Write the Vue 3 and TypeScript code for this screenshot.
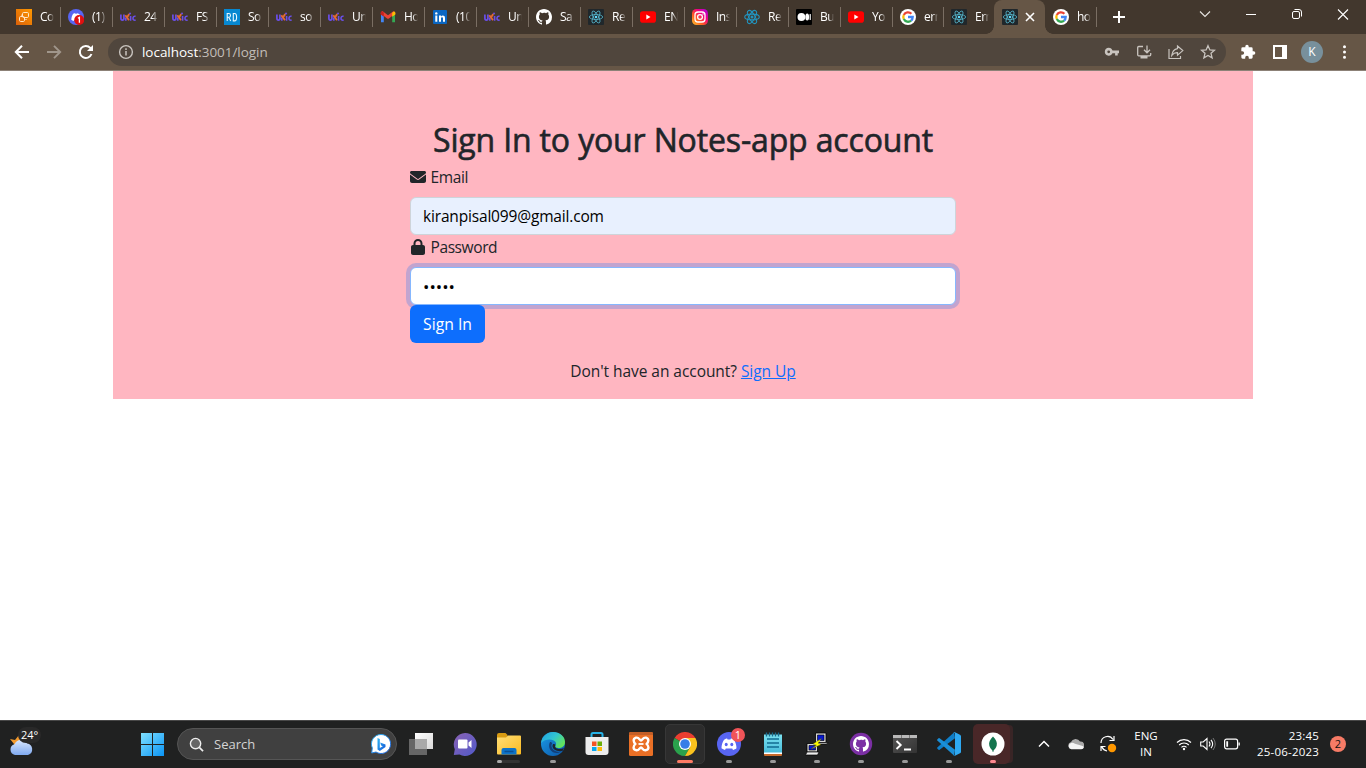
<script setup lang="ts">
import { ref } from 'vue'

interface Tab {
  icon: string
  title: string
  active?: boolean
}

interface TaskApp {
  icon: string
  state?: 'running' | 'active' | 'alert' | 'folder'
  badge?: string
}

const tabs: Tab[] = [
  { icon: 'aws', title: 'Co' },
  { icon: 'discord-tab', title: '(1)' },
  { icon: 'unic', title: '24' },
  { icon: 'unic', title: 'FS' },
  { icon: 'rd', title: 'So' },
  { icon: 'unic', title: 'so' },
  { icon: 'unic', title: 'Un' },
  { icon: 'gmail', title: 'Ho' },
  { icon: 'linkedin', title: '(10' },
  { icon: 'unic', title: 'Un' },
  { icon: 'github', title: 'Sa' },
  { icon: 'react-dark', title: 'Re' },
  { icon: 'youtube', title: 'EN' },
  { icon: 'instagram', title: 'Ins' },
  { icon: 'react', title: 'Re' },
  { icon: 'medium', title: 'Bu' },
  { icon: 'youtube', title: 'Yo' },
  { icon: 'google', title: 'err' },
  { icon: 'react-dark', title: 'Err' },
  { icon: 'react-dark', title: '', active: true },
  { icon: 'google', title: 'ho' },
]

const apps: TaskApp[] = [
  { icon: 'taskview' },
  { icon: 'chat' },
  { icon: 'folder', state: 'folder' },
  { icon: 'edge', state: 'running' },
  { icon: 'store' },
  { icon: 'xampp' },
  { icon: 'chrome', state: 'active' },
  { icon: 'discord', state: 'running', badge: '1' },
  { icon: 'notepad', state: 'running' },
  { icon: 'putty', state: 'running' },
  { icon: 'ghdesktop', state: 'running' },
  { icon: 'terminal', state: 'running' },
  { icon: 'vscode', state: 'running' },
  { icon: 'mongo', state: 'alert' },
]

const email = ref('kiranpisal099@gmail.com')
const password = ref('•••••')
</script>

<template>
  <div class="screen">
    <svg class="defs" width="0" height="0" aria-hidden="true">
      <defs>
        <linearGradient id="g-aws" x1="0" y1="1" x2="1" y2="0"><stop offset="0" stop-color="#d9600a" /><stop offset="1" stop-color="#ff9900" /></linearGradient>
        <linearGradient id="g-insta" x1="0" y1="1" x2="1" y2="0"><stop offset="0" stop-color="#ffc72e" /><stop offset=".35" stop-color="#ff5a20" /><stop offset=".65" stop-color="#f00082" /><stop offset="1" stop-color="#a000f0" /></linearGradient>
        <linearGradient id="g-win" x1="0" y1="0" x2="1" y2="1"><stop offset="0" stop-color="#7fe0ff" /><stop offset="1" stop-color="#0a94f5" /></linearGradient>
        <linearGradient id="g-chat" x1="0" y1="0" x2="1" y2="1"><stop offset="0" stop-color="#8a62b4" /><stop offset="1" stop-color="#5059c9" /></linearGradient>
        <linearGradient id="g-folder" x1="0" y1="0" x2="1" y2="1"><stop offset="0" stop-color="#ffdf78" /><stop offset="1" stop-color="#fbba20" /></linearGradient>
        <linearGradient id="g-edge" x1="0" y1="0" x2="1" y2=".6"><stop offset="0" stop-color="#1e9de6" /><stop offset=".55" stop-color="#32c6d0" /><stop offset="1" stop-color="#62e35c" /></linearGradient>
        <linearGradient id="g-edge2" x1="0" y1="0" x2="1" y2="1"><stop offset="0" stop-color="#1b9ce8" /><stop offset="1" stop-color="#0b55a5" /></linearGradient>
        <linearGradient id="g-cloud" x1="0" y1="0" x2="0" y2="1"><stop offset="0" stop-color="#d8e7ff" /><stop offset="1" stop-color="#7fa9ef" /></linearGradient>
        <linearGradient id="g-note" x1="0" y1="0" x2="0" y2="1"><stop offset="0" stop-color="#7be2f1" /><stop offset="1" stop-color="#45b9d8" /></linearGradient>
        <linearGradient id="g-bing" x1="0" y1="0" x2="1" y2="1"><stop offset="0" stop-color="#2db7f5" /><stop offset="1" stop-color="#1757d7" /></linearGradient>
        <linearGradient id="g-view" x1="0" y1="0" x2="1" y2="1"><stop offset="0" stop-color="#ffffff" /><stop offset="1" stop-color="#d9d9d9" /></linearGradient>
        <linearGradient id="g-term" x1="0" y1="0" x2="1" y2="1"><stop offset="0" stop-color="#555" /><stop offset=".5" stop-color="#444" /><stop offset="1" stop-color="#333" /></linearGradient>
      </defs>

      <symbol id="i-aws" viewBox="0 0 16 16">
        <rect width="16" height="16" fill="url(#g-aws)" />
        <g fill="none" stroke="#ffe6c4" stroke-width="1"><rect x="6.500" y="3.500" width="6" height="5" rx="1.200" /><rect x="3.500" y="7.500" width="5" height="5" rx="1.200" /><path d="M5.500 7V5.500M9 10.500h2" opacity=".6" /></g>
      </symbol>
      <symbol id="i-discord-tab" viewBox="0 0 16 16">
        <circle cx="8" cy="8" r="8" fill="#5865f2" />
        <path d="M3.300 10.800c.1-2.400.8-4.500 1.700-5.900 1-.6 1.800-.7 2.100-.7l.3.600h1.300l.3-.6c.4 0 1.200.2 2.200.7 1 1.500 1.600 3.500 1.600 5.900-.8.7-1.600 1-2.300 1.100l-.6-1H6.200l-.6 1c-.8-.1-1.600-.5-2.300-1.100z" fill="#fff" />
        <circle cx="11.200" cy="11" r="5" fill="#e01010" />
        <path d="M9.900 9.300l1.500-.9v5.300" fill="none" stroke="#fff" stroke-width="1.300" />
      </symbol>
      <symbol id="i-unic" viewBox="0 0 16 16">
        <path d="M.9 5.500v3.700q0 1.900 1.500 1.900t1.500-1.900V5.500M5.800 11.700V8.500" fill="none" stroke="#6a4fe8" stroke-width="1.700" />
        <path d="M5.300 6.200l3.700 5.100M9.200 5L7.300 8" fill="none" stroke="#e36a32" stroke-width="1.900" />
        <path d="M9.400 4l1.300 1M10.600 7v4.700M15.600 7.300q-2.600-.5-2.600 1.900t2.600 1.900" fill="none" stroke="#6a4fe8" stroke-width="1.600" />
      </symbol>
      <symbol id="i-rd" viewBox="0 0 16 16">
        <rect width="16" height="16" fill="#0788d1" />
        <path d="M3.200 12V4.500h1.600q1.700 0 1.700 1.900T4.800 8.300H3.500m1.300 0L6.700 12M9.300 4.500h1.300q2 0 2 3.700t-2 3.700H9.300z" fill="none" stroke="#e9f7ff" stroke-width="1.100" />
      </symbol>
      <symbol id="i-gmail" viewBox="0 0 16 16">
        <path d="M1 3.500v9.700h2.800V6z" fill="#4285f4" /><path d="M12.200 6v7.200H15V3.500z" fill="#34a853" />
        <path d="M1.500 3.300L8 8.200l6.500-4.900" stroke="#ea4335" stroke-width="3" fill="none" stroke-linejoin="round" />
        <path d="M.7 3.300q.8-1.500 2.300-.6l.8.800v4.300L.7 5.500z" fill="#c5221f" /><path d="M12.200 3.700l1-.8q1.600-.9 2.200.8v1.800l-3.200 2.300z" fill="#fbbc04" />
      </symbol>
      <symbol id="i-linkedin" viewBox="0 0 16 16">
        <rect x="1" y="1" width="14" height="14" rx="1" fill="#0a66c2" />
        <path d="M3.300 6.500h2v6.200h-2zM7 6.500h2v.9c.9-1.400 4-1.500 4 1.500v3.800h-2V9.500c0-1.900-2-1.700-2 0v3.200H7z" fill="#fff" /><circle cx="4.300" cy="4.400" r="1.200" fill="#fff" />
      </symbol>
      <symbol id="i-github" viewBox="0 0 16 16">
        <path fill="#fff" d="M8 0C3.580 0 0 3.580 0 8c0 3.540 2.290 6.530 5.470 7.590.4.070.550-.170.550-.380 0-.190-.010-.820-.010-1.490-2.010.370-2.530-.490-2.690-.940-.090-.230-.480-.940-.820-1.130-.280-.150-.680-.520-.010-.530.630-.010 1.080.580 1.230.820.720 1.210 1.870.870 2.330.660.070-.520.280-.870.510-1.070-1.780-.2-3.640-.890-3.640-3.950 0-.870.310-1.590.820-2.150-.080-.2-.360-1.020.080-2.120 0 0 .670-.210 2.200.820A7.600 7.600 0 018 3.860c.680 0 1.360.090 2 .270 1.530-1.040 2.200-.820 2.200-.820.440 1.100.160 1.920.080 2.120.510.560.820 1.270.820 2.150 0 3.070-1.870 3.750-3.650 3.950.290.250.540.730.540 1.480 0 1.070-.010 1.930-.010 2.200 0 .210.150.460.550.380A8.010 8.010 0 0016 8c0-4.420-3.580-8-8-8z" />
      </symbol>
      <symbol id="i-react" viewBox="0 0 16 16">
        <g fill="none" stroke="#2294bf" stroke-width="1.100"><ellipse cx="8" cy="8" rx="7.300" ry="2.900" /><ellipse cx="8" cy="8" rx="7.300" ry="2.900" transform="rotate(60 8 8)" /><ellipse cx="8" cy="8" rx="7.300" ry="2.900" transform="rotate(120 8 8)" /></g><circle cx="8" cy="8" r="1.500" fill="#2294bf" />
      </symbol>
      <symbol id="i-react-dark" viewBox="0 0 16 16">
        <rect width="16" height="16" rx="1" fill="#20272b" />
        <g fill="none" stroke="#55b6cc" stroke-width=".8"><ellipse cx="8" cy="8" rx="6.700" ry="2.500" /><ellipse cx="8" cy="8" rx="6.700" ry="2.500" transform="rotate(60 8 8)" /><ellipse cx="8" cy="8" rx="6.700" ry="2.500" transform="rotate(120 8 8)" /></g><circle cx="8" cy="8" r="1.300" fill="#61dafb" />
      </symbol>
      <symbol id="i-youtube" viewBox="0 0 16 16"><rect y="2.300" width="16" height="11.400" rx="2.800" fill="#f00" /><path d="M6.300 5.600v4.800L10.500 8z" fill="#fff" /></symbol>
      <symbol id="i-instagram" viewBox="0 0 16 16">
        <rect width="16" height="16" rx="4.500" fill="url(#g-insta)" />
        <g fill="none" stroke="#fff" stroke-width="1.300"><rect x="3" y="3" width="10" height="10" rx="3" /><circle cx="8" cy="8" r="2.400" /></g><circle cx="11" cy="5" r=".7" fill="#fff" />
      </symbol>
      <symbol id="i-medium" viewBox="0 0 16 16"><rect width="16" height="16" rx="1" fill="#000" /><circle cx="5.400" cy="8" r="3.900" fill="#fff" /><ellipse cx="11.200" cy="8" rx="1.900" ry="3.600" fill="#fff" /><rect x="13.600" y="5" width="1.200" height="6" rx=".5" fill="#fff" /></symbol>
      <symbol id="i-google" viewBox="0 0 16 16">
        <circle cx="8" cy="8" r="8" fill="#fff" />
        <g fill="none" stroke-width="2.300"><path d="M11.400 4.800A4.700 4.700 0 0 0 3.800 5.900" stroke="#ea4335" /><path d="M3.800 5.900a4.700 4.700 0 0 0 0 4.200" stroke="#fbbc05" /><path d="M3.800 10.100a4.700 4.700 0 0 0 7.300 1.500" stroke="#34a853" /><path d="M8 8h4.700q0 2.300-1.600 3.600" stroke="#4285f4" /></g>
      </symbol>

      <symbol id="i-taskview" viewBox="0 0 24 24"><rect x="6" y="1" width="18" height="16" fill="url(#g-view)" /><path d="M0 7h18v16H0z" fill="#6c6c6c" opacity=".92" /><path d="M6 7h12v10H6z" fill="#a9a9a9" /></symbol>
      <symbol id="i-chat" viewBox="0 0 24 24"><path d="M12 1a11.500 11.500 0 1 1-5.500 21.500L.800 23l1-5.700A11.500 11.500 0 0 1 12 1z" fill="url(#g-chat)" /><rect x="5" y="7.500" width="9.500" height="9" rx="1" fill="#fff" /><path d="M15.500 10.500L18.500 8v8l-3-2.500z" fill="#fff" /></symbol>
      <symbol id="i-folder" viewBox="0 0 24 24"><path d="M0 3q0-2 2-2h6.500l2 2v4H0z" fill="#d89b12" /><path d="M0 5.500h9l2-2h12q1 0 1 1v17q0 1-1 1H1q-1 0-1-1z" fill="url(#g-folder)" /><path d="M4.500 22.500V18q0-2 2-2h11q2 0 2 2v4.500z" fill="#0d73c8" /><path d="M7.500 19.500h9" stroke="#0a4f92" stroke-width="1.500" /></symbol>
      <symbol id="i-edge" viewBox="0 0 24 24"><circle cx="12" cy="12" r="12" fill="url(#g-edge2)" /><path d="M0 11C1 4 6 0 12 0c7 0 12 4.500 12 10 0 4-3 6-6.500 6-2.500 0-3.500-1-3-2.200.600-1 .700-1.800.500-2.800C14 7 5 5.500 0 11z" fill="url(#g-edge)" /><path d="M9 10c-3 6 2 12 8 11l4.500-2c-3 1.500-6 1-8.200-.500-3-2-3.500-5.200-2-7.500-1-.800-1.500-1-2.300-1z" fill="#133f78" /><path d="M12 12c-2 4 2 8 9.500 7l1.500-3c-3 1.500-7 1.300-8.500-.500-.800-1-.500-2 0-2.500-.500-1-1.400-1.300-2.500-1z" fill="#1c2430" /></symbol>
      <symbol id="i-store" viewBox="0 0 24 24"><path d="M6.500 6V2.500Q6.500 1 8 1h8q1.500 0 1.500 1.500V6" fill="none" stroke="#25b2e7" stroke-width="2" /><path d="M.500 5h23v15q0 3-3 3h-17q-3 0-3-3z" fill="#ededed" /><path d="M7 9.500h4.500V14H7z" fill="#f35325" /><path d="M12.500 9.500H17V14h-4.500z" fill="#6aae08" /><path d="M7 15h4.500v4H7z" fill="#05a6f0" /><path d="M12.500 15H17v4h-4.500z" fill="#ffba08" /></symbol>
      <symbol id="i-xampp" viewBox="0 0 24 24"><rect width="24" height="24" rx="1.500" fill="#ea7026" /><path d="M0 1.500Q0 0 1.500 0h21Q24 0 24 1.500V3H0z" fill="#c45f27" /><path d="M7 5.700c3-.8 3.500 2.800 5 2.800s2-3.600 5-2.800c3.500 1.200 2.500 4.300.7 6.300 2 2 2.800 5-.7 6.200-3 .9-3.500-2.700-5-2.700s-2 3.600-5 2.700c-3.500-1.200-2.700-4.200-.7-6.200-1.800-2-2.800-5.100.7-6.300z" fill="none" stroke="#fff" stroke-width="2.400" /><path d="M9.500 12h5" stroke="#fff" stroke-width="1.800" /></symbol>
      <symbol id="i-chrome" viewBox="0 0 24 24"><path d="M12 12L1.600 6A12 12 0 0 1 22.400 6z" fill="#ea3e30" /><path d="M12 12L1.600 6A12 12 0 0 0 12 24l5.200-9z" fill="#2aa24c" /><path d="M12 6h10.400A12 12 0 0 1 12 24l5.200-9z" fill="#fcc31e" /><circle cx="12" cy="12" r="6" fill="#fff" /><circle cx="12" cy="12" r="4.800" fill="#377de8" /></symbol>
      <symbol id="i-discord" viewBox="0 0 24 24"><circle cx="12" cy="12" r="12" fill="#5865f2" /><path d="M4.500 16.300c0-3.300 1-6.400 2.600-8.600 1.200-.8 2.300-1.100 3-1.200l.5 1h2.800l.5-1c.8.100 1.900.4 3 1.200 1.600 2.200 2.600 5.300 2.600 8.600-1.200 1-2.300 1.400-3.500 1.600l-.8-1.400H8.800L8 17.900c-1.200-.2-2.300-.7-3.500-1.600z" fill="#fff" /><ellipse cx="9.200" cy="12.500" rx="1.500" ry="1.700" fill="#5865f2" /><ellipse cx="14.800" cy="12.500" rx="1.500" ry="1.700" fill="#5865f2" /></symbol>
      <symbol id="i-notepad" viewBox="0 0 24 24"><path d="M3 21h18v2q0 1-1 1H4q-1 0-1-1z" fill="#c96b2c" /><path d="M3 2.500h18V22H3z" fill="url(#g-note)" /><path d="M3 20.500h18V22H3z" fill="#fff" /><path d="M6 7h12M6 11h12M6 15h12" stroke="#126c91" stroke-width="1.500" /><path d="M5.500.5v4M8.500.5v4M11.500.5v4M14.500.5v4M17.500.5v4" stroke="#176b8d" stroke-width="1.400" /></symbol>
      <symbol id="i-putty" viewBox="0 0 24 24"><path d="M10.500 1h10.500v9.500H10.500zM2 11.500h10.500V20H2z" fill="#d6d6d6" stroke="#000" stroke-width=".8" /><path d="M12.500 3H19v5.500h-6.500zM4 13.500h6.500v4.500H4z" fill="#0718d0" stroke="#000" stroke-width=".6" /><path d="M11 10.500h12L21.500 12H10zM2 20h12l-1.500 3H.5z" fill="#eee" stroke="#000" stroke-width=".7" /><path d="M16.500 6.500L8 12l3.500 1.200L6 17l10-4.500-3-1.300z" fill="#ff0" stroke="#5b5900" stroke-width=".4" /></symbol>
      <symbol id="i-ghdesktop" viewBox="0 0 24 24"><circle cx="12" cy="12" r="11.200" fill="#7b2fa4" /><svg x="4" y="4" width="16" height="16"><use href="#i-github" /></svg></symbol>
      <symbol id="i-terminal" viewBox="0 0 24 24"><rect y="3" width="24" height="18" rx="1" fill="url(#g-term)" /><path d="M0 3h24v3H0z" fill="#b9b9b9" /><path d="M8 3h1v3H8zM16 3h1v3h-1z" fill="#777" /><path d="M3.500 9l4.200 4-4.200 4M11 17.500h7" fill="none" stroke="#fff" stroke-width="1.900" /></symbol>
      <symbol id="i-vscode" viewBox="0 0 24 24"><path d="M18 6.200L2.600 17.700q-.6.400-1.100 0L.3 16.500q-.5-.6 0-1.100L17.200.3z" fill="#0f7fc9" /><path d="M18 17.800L2.600 6.300q-.6-.4-1.100 0L.3 7.500q-.5.600 0 1.100l16.900 15.100z" fill="#1a8fd8" /><path d="M17.500.1l5.500 2.600q1 .5 1 1.500v15.600q0 1-1 1.500l-5.500 2.600q-.8.300-1.300-.4 1.800.6 1.800-1.100V1.600Q18 0 16.200.5q.5-.7 1.300-.4z" fill="#2ea9f2" /></symbol>
      <symbol id="i-mongo" viewBox="0 0 24 24"><circle cx="12" cy="12" r="11.500" fill="#fff" /><path d="M12 4.500c3 3 4.500 6 3.700 9-.4 2-2 4-3.700 5.500-1.700-1.500-3.300-3.500-3.700-5.500-.8-3 .7-6 3.700-9z" fill="#13744e" /><path d="M12 15v5" stroke="#13744e" stroke-width=".8" /></symbol>
    </svg>

    <header class="tabstrip">
      <div v-for="(tab, i) in tabs" :key="i" class="tab" :class="{ active: tab.active, quiet: tabs[i + 1]?.active }">
        <svg class="favicon"><use :href="'#i-' + tab.icon" /></svg>
        <span v-if="!tab.active" class="tab-title">{{ tab.title }}</span>
        <svg v-else class="tab-close" viewBox="0 0 16 16"><path d="M4 4l8 8M12 4l-8 8" stroke="#fff" stroke-width="1.600" /></svg>
      </div>
      <svg class="new-tab" viewBox="0 0 16 16"><path d="M8 2v12M2 8h12" stroke="#fff" stroke-width="2" /></svg>
      <div class="window-controls">
        <svg viewBox="0 0 16 16"><path d="M3 5.500l5 5 5-5" fill="none" stroke="#e8e5e2" stroke-width="1.100" /></svg>
        <svg viewBox="0 0 16 16"><path d="M3 8.500h10" stroke="#fff" /></svg>
        <svg viewBox="0 0 16 16" fill="none" stroke="#fff"><rect x="3.500" y="5.500" width="7" height="7" rx="1.500" /><path d="M5.500 3.500H10q2.500 0 2.500 2.500v4.500" /></svg>
        <svg viewBox="0 0 16 16"><path d="M3 3.500l10 10M13 3.500l-10 10" stroke="#fff" stroke-width="1.100" /></svg>
      </div>
    </header>

    <nav class="toolbar">
      <svg class="nav-icon" viewBox="0 0 16 16"><path d="M15 8H2M8 1.800L1.800 8 8 14.200" fill="none" stroke="#fff" stroke-width="2" /></svg>
      <svg class="nav-icon" viewBox="0 0 16 16"><path d="M1 8h13M8 1.800L14.200 8 8 14.200" fill="none" stroke="#a0968b" stroke-width="1.900" /></svg>
      <svg class="nav-icon" viewBox="0 0 16 16"><path d="M13.500 10A6 6 0 1 1 12.300 3.900L14 5.700" fill="none" stroke="#fff" stroke-width="2" /><path d="M15 1v6H9z" fill="#fff" /></svg>
      <div class="omnibox">
        <svg class="info" viewBox="0 0 16 16"><circle cx="8" cy="8" r="6.400" fill="none" stroke="#c9c4bf" stroke-width="1.400" /><path d="M8 7v4.500M8 4.300V6" stroke="#c9c4bf" stroke-width="1.500" /></svg>
        <span class="url"><b>localhost</b>:3001/login</span>
        <div class="omni-actions">
          <svg viewBox="0 0 16 16"><path d="M4.700 3.700a4 4 0 0 1 3.800 2.900H15v2.700h-1.300v2.200h-2.600V9.300H8.500a4 4 0 1 1-3.800-5.600zm0 2.700a1.400 1.400 0 1 0 0 2.800 1.400 1.400 0 0 0 0-2.800z" fill="#c9c4bf" /></svg>
          <svg viewBox="0 0 16 16"><path d="M7 2.500H2.700q-1 0-1 1v7.300q0 1 1 1h11q1 0 1-1V9M11 1.500v7M8 5.800l3 3 3-3" fill="none" stroke="#c9c4bf" stroke-width="1.300" /><path d="M4.500 12h7v2.500h-7z" fill="#c9c4bf" /></svg>
          <svg viewBox="0 0 16 16"><path d="M1 5v9.500h11.500V12M9.500 2l5.300 4.600-5.300 4.600V8.700Q6 8.500 3.800 11.400 4.500 5.500 9.500 4.600z" fill="none" stroke="#c9c4bf" stroke-width="1.200" /></svg>
          <svg viewBox="0 0 16 16"><path d="M8 1.700l1.900 4.200 4.600.4-3.500 3 1.100 4.500L8 11.400l-4.100 2.400L5 9.300l-3.500-3 4.600-.4z" fill="none" stroke="#c9c4bf" stroke-width="1.300" /></svg>
        </div>
      </div>
      <svg class="side-icon puzzle" viewBox="0 0 24 24"><path d="M20.500 11H19V7a2 2 0 0 0-2-2h-4V3.500a2.500 2.500 0 0 0-5 0V5H4a2 2 0 0 0-2 2v3.800h1.500a2.700 2.700 0 0 1 0 5.400H2V20a2 2 0 0 0 2 2h3.800v-1.500a2.700 2.700 0 0 1 5.400 0V22H17a2 2 0 0 0 2-2v-4h1.500a2.500 2.500 0 0 0 0-5z" fill="#fff" /></svg>
      <svg class="side-icon panel" viewBox="0 0 16 16"><path d="M2 2h12v12H2z" fill="none" stroke="#fff" stroke-width="2" /><path d="M10 1h5v14h-5z" fill="#fff" /></svg>
      <div class="avatar">K</div>
      <svg class="side-icon" viewBox="0 0 16 16"><path d="M8.500 2.700v.01M8.500 8v.01M8.500 13.300v.01" stroke="#fff" stroke-width="3" stroke-linecap="round" /></svg>
    </nav>

    <main class="page">
      <section class="container">
        <h2>Sign In to your Notes-app account</h2>
        <form class="form" @submit.prevent>
          <label for="email"><svg viewBox="0 0 512 512"><path fill="currentColor" d="M48 64C21.500 64 0 85.500 0 112c0 15.100 7.100 29.300 19.200 38.400L236.800 313.600c11.400 8.500 27 8.500 38.400 0L492.800 150.400c12.100-9.100 19.200-23.300 19.200-38.400 0-26.500-21.500-48-48-48H48zM0 176V384c0 35.300 28.700 64 64 64H448c35.300 0 64-28.700 64-64V176L294.400 339.200c-22.800 17.100-54 17.100-76.800 0L0 176z" /></svg><span>Email</span></label>
          <input id="email" v-model="email" class="email" type="text" />
          <label for="password"><svg viewBox="0 0 512 512"><path fill="currentColor" d="M176 144v48H336V144a80 80 0 0 0-160 0zm-64 48V144a144 144 0 0 1 288 0v48h16c35.300 0 64 28.700 64 64V448c0 35.300-28.700 64-64 64H96c-35.300 0-64-28.700-64-64V256c0-35.300 28.700-64 64-64z" /></svg><span>Password</span></label>
          <input id="password" v-model="password" class="password" type="text" />
          <button type="submit">Sign In</button>
        </form>
        <p>Don't have an account? <a href="#">Sign Up</a></p>
      </section>
    </main>

    <footer class="taskbar">
      <div class="weather">
        <svg viewBox="0 0 26 24"><path d="M1 5l5 1 4-5 2 7-6 7-1-5z" fill="#f29a2e" /><path d="M6 21a5.500 5.500 0 0 1-.500-10.700A7 7 0 0 1 18 9.500 5.900 5.900 0 0 1 19 21z" fill="url(#g-cloud)" /></svg>
        <span>24°</span>
      </div>
      <svg class="start" viewBox="0 0 23 23"><path d="M0 0h11v11H0zM12 0h11v11H12zM0 12h11v11H0zM12 12h11v11H12z" fill="url(#g-win)" /></svg>
      <div class="search">
        <svg class="lens" viewBox="0 0 16 16"><circle cx="7" cy="7" r="5.500" fill="#666" stroke="#eee" stroke-width="1.500" /><path d="M11 11l4 4" stroke="#eee" stroke-width="1.800" /></svg>
        <span>Search</span>
        <svg class="bing" viewBox="0 0 20 20"><path d="M10 .5A9.500 9.500 0 1 1 5 18l-4.300 1L1.300 14A9.500 9.500 0 0 1 10 .5z" fill="#fff" stroke="url(#g-bing)" /><path d="M6.500 4l2.300 1v9l3-1.700-1.700-.9-.9-2.900 5.300 2v2.600L8.800 17l-2.300-1.500z" fill="url(#g-bing)" /></svg>
      </div>
      <div class="apps">
        <div v-for="app in apps" :key="app.icon" class="app" :class="app.state">
          <svg class="app-icon"><use :href="'#i-' + app.icon" /></svg>
          <i v-if="app.badge" class="app-badge">{{ app.badge }}</i>
        </div>
      </div>
      <div class="tray">
        <svg class="chevron" viewBox="0 0 16 16"><path d="M3 10.500l5-5 5 5" fill="none" stroke="#fff" stroke-width="1.500" /></svg>
        <svg class="onedrive" viewBox="0 0 16 16"><path d="M3.500 13A3.500 3.500 0 0 1 3 6.100 5 5 0 0 1 12 5.500a3.700 3.700 0 0 1 1 7.500z" fill="#aaa" /><path d="M3.300 13.200a3.200 3.200 0 0 1-.3-6.200q2-.5 4 .7l6 1.800q2.800.5 2.700 2.100-.2 1.600-2.400 1.600z" fill="#f4f4f4" /></svg>
        <svg class="sync" viewBox="0 0 18 18"><path d="M2 8a6.500 6.500 0 0 1 12-3.500M15 1v4.500h-4.500M2 16v-4.500h4.500M3 12a6.500 6.500 0 0 0 5 4" fill="none" stroke="#fff" stroke-width="1.200" /><circle cx="13" cy="13" r="4.200" fill="#ff9800" /></svg>
        <div class="lang"><span>ENG</span><span>IN</span></div>
        <svg class="wifi" viewBox="0 0 16 16"><path d="M1 6.500a10 10 0 0 1 14 0M3.200 9a6.800 6.800 0 0 1 9.600 0M5.500 11.300a3.500 3.500 0 0 1 5 0" fill="none" stroke="#fff" stroke-width="1.200" /><circle cx="8" cy="13" r="1.200" fill="#fff" /></svg>
        <svg class="volume" viewBox="0 0 16 16"><path d="M.7 6h2.500L7 2.500v11L3.200 10H.7z" fill="none" stroke="#fff" stroke-width="1.100" /><path d="M9 5.500q2 2.500 0 5M11 3.800q3.300 4.200 0 8.400" fill="none" stroke="#fff" stroke-width="1.100" /><path d="M13 2q4.500 6 0 12" fill="none" stroke="#777" /></svg>
        <svg class="battery" viewBox="0 0 16 16"><rect x=".6" y="3.200" width="13" height="9.600" rx="2" fill="none" stroke="#fff" stroke-width="1.200" /><path d="M2.300 5.200h1.800v5.600H2.300zM14.500 6.500h1.300v3h-1.300z" fill="#fff" /></svg>
        <div class="clock"><span>23:45</span><span>25-06-2023</span></div>
        <div class="count">2</div>
      </div>
    </footer>
  </div>
</template>

<style>
body { background: #fff; overflow: hidden; }
</style>

<style scoped>
* { box-sizing: border-box; }
.screen { width: 1366px; height: 768px; display: flex; flex-direction: column; font-family: "Open Sans", "Noto Sans", sans-serif; position: relative; overflow: hidden; }
.defs { position: absolute; }
svg { display: block; flex: none; }

.tabstrip { height: 34px; background: #42372d; display: flex; padding-left: 8px; }
.tab { width: 52px; height: 34px; flex: none; padding: 0 0 0 8px; display: flex; align-items: center; position: relative; }
.tab:nth-child(n + 18) { width: 51px; }
.tab::after { content: ""; width: 1px; height: 20px; background: #7a6e63; position: absolute; right: -1px; top: 7px; }
.favicon { width: 16px; height: 16px; }
.tab-title { width: 14px; height: 18px; margin-left: 8px; overflow: hidden; white-space: nowrap; color: #fff; font-size: 12px; line-height: 17px; letter-spacing: -.5px; -webkit-mask-image: linear-gradient(90deg, #000 60%, transparent 100%); mask-image: linear-gradient(90deg, #000 60%, transparent 100%); }
.tab.active { background: #665646; border-radius: 8px 8px 0 0; }
.tab.active::before { content: ""; position: absolute; left: -8px; right: -8px; bottom: 0; height: 8px; background: radial-gradient(circle at 0 0, transparent 7.500px, #665646 8px) left / 8px 8px no-repeat, radial-gradient(circle at 100% 0, transparent 7.500px, #665646 8px) right / 8px 8px no-repeat; }
.tab.active::after, .tab.quiet::after { display: none; }
.tab-close { width: 16px; height: 16px; margin-left: 4px; }
.new-tab { width: 16px; height: 16px; margin: 9px 0 0 15px; }
.window-controls { margin-left: auto; display: flex; gap: 30px; padding: 6px 15px 0 0; }
.window-controls svg { width: 16px; height: 16px; }

.toolbar { height: 37px; background: #665646; border-bottom: 1px solid #8c8177; display: flex; align-items: center; padding: 0 14px; }
.nav-icon { width: 16px; height: 16px; margin-right: 16px; }
.omnibox { width: 1118px; height: 28px; margin-left: -2px; border-radius: 14px; background: #50463d; display: flex; align-items: center; padding: 0 10px; }
.info { width: 16px; height: 16px; }
.url { margin-left: 8px; font-size: 13.500px; color: #c2bdb8; letter-spacing: -.04px; line-height: 20px; }
.url b { color: #fff; font-weight: 400; }
.omni-actions { margin-left: auto; display: flex; gap: 16px; }
.omni-actions svg { width: 16px; height: 16px; }
.side-icon { width: 16px; height: 16px; }
.puzzle { margin-left: 14px; }
.panel { margin-left: 16px; }
.avatar { width: 22px; height: 22px; margin: 0 13px; border-radius: 50%; background: #78909c; color: #fff; font-size: 12px; line-height: 22px; text-align: center; flex: none; }

.page { height: 649px; background: #fff; color: #212529; font-size: 16px; line-height: 24px; }
.container { width: 1140px; height: 328px; margin: 0 auto; padding-top: 50px; background: #ffb6c1; display: flex; flex-direction: column; align-items: center; }
h2 { margin: 0 0 6px; font-size: 32px; font-weight: 400; line-height: 38.400px; white-space: nowrap; letter-spacing: -.15px; -webkit-text-stroke: .6px #212529; }
.form { width: 546px; display: flex; flex-direction: column; align-items: flex-start; }
label { height: 24px; margin-bottom: 8px; display: flex; align-items: center; gap: 4.500px; font-size: 15.500px; letter-spacing: -.4px; }
label svg { width: 16px; height: 16px; }
input { width: 546px; height: 38px; padding: 6px 12px; border: 1px solid #ced4da; border-radius: 6px; font: 15.500px/24px "Open Sans", "Noto Sans", sans-serif; letter-spacing: -.17px; color: #000; outline: none; }
.email { background: #e8f0fe; }
.password { background: #fff; border-color: #86b7fe; box-shadow: 0 0 0 4px rgba(13, 110, 253, .25); font-size: 17px; letter-spacing: 0; }
button { width: 75px; height: 38px; padding: 0; border: 0; border-radius: 6px; background: #0d6efd; color: #fff; font: 15.700px/24px "Open Sans", "Noto Sans", sans-serif; position: relative; }
p { margin: 16px 0; font-size: 15.500px; letter-spacing: -.05px; }
a { color: #0d6efd; text-decoration: underline; }

.taskbar { height: 48px; box-shadow: inset 0 1px #484848; background: #202121; color: #fff; display: flex; align-items: center; }
.weather { width: 44px; height: 48px; margin-left: 8px; position: relative; }
.weather svg { width: 26px; height: 24px; margin: 14px 0 0 1px; }
.weather span { position: absolute; left: 10px; top: 7px; padding: 0 3px; height: 16px; border-radius: 8px; background: #292929; font-size: 11px; line-height: 16px; }
.start { width: 23px; height: 23px; margin-left: 89px; }
.search { width: 220px; height: 32px; margin-left: 13px; border: 1px solid #555; border-radius: 16px; background: #404040; display: flex; align-items: center; padding: 0 5px 0 11px; font-size: 13px; color: #d4d4d4; }
.lens { width: 15px; height: 15px; margin-right: 10px; }
.bing { width: 20px; height: 20px; margin-left: auto; }
.apps { display: flex; margin-left: 2px; }
.app { width: 44px; height: 48px; display: flex; align-items: center; justify-content: center; position: relative; }
.app::before { content: ""; position: absolute; inset: 4px 2px; border-radius: 5px; }
.app::after { content: ""; position: absolute; left: 19px; top: 40px; width: 6px; height: 3px; border-radius: 2px; }
.app-icon { width: 24px; height: 24px; position: relative; }
.running::after { background: #999; }
.folder::before { left: 10px; right: 11px; top: 40px; bottom: 5px; background: #333; border-radius: 2px; }
.folder::after { left: 10px; width: 5px; background: #aaa; }
.active.app::before { background: #2c2c2c; border: 1px solid #373737; }
.active.app::after { left: 14px; width: 16px; background: #ff7b65; }
.alert::before { right: 5px; left: 2px; background: #492728; box-shadow: 4px 0 0 -1px #392526; }
.alert::after { background: #ff8991; }
.app-badge { position: absolute; top: 8px; right: 6px; width: 14px; height: 14px; border-radius: 50%; background: #f05458; font-size: 11px; font-style: normal; line-height: 14px; text-align: center; }
.tray { margin-left: auto; padding-right: 20px; display: flex; align-items: center; }
.chevron { width: 16px; height: 16px; margin-right: 16px; }
.onedrive { width: 16px; height: 16px; margin-right: 15px; }
.sync { width: 18px; height: 18px; margin-right: 16px; }
.lang, .clock { display: flex; flex-direction: column; font-size: 11.500px; line-height: 16px; }
.lang { width: 26px; align-items: center; margin-right: 17px; }
.wifi, .volume, .battery { width: 16px; height: 16px; }
.volume { margin: 0 8px; }
.clock { width: 64px; align-items: flex-end; margin: 0 11px 0 15px; letter-spacing: .2px; white-space: nowrap; }
.count { width: 16px; height: 16px; border-radius: 50%; background: #f77b66; color: #111; font-size: 11px; line-height: 16px; text-align: center; }
</style>
